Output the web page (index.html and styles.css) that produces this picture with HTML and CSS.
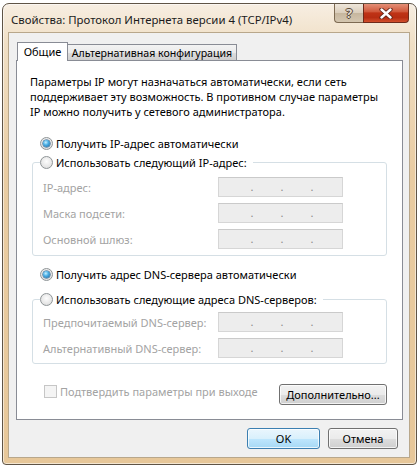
FILE: index.html
```html
<!DOCTYPE html>
<html lang="ru">
<head>
<meta charset="utf-8">
<title>Свойства: Протокол Интернета версии 4 (TCP/IPv4)</title>
<link rel="stylesheet" href="styles.css">
</head>
<body>
<div class="window">
  <div class="titlebar">
    <span class="title">Свойства: Протокол Интернета версии 4 (TCP/IPv4)</span>
    <div class="caption">
      <div class="cbtn help">?</div>
      <div class="cbtn close">
        <svg width="14" height="11" viewBox="0 0 14 11">
          <path d="M2.5 1.5 L11.5 9.5 M11.5 1.5 L2.5 9.5" stroke="#5e2215" stroke-width="4.2" stroke-linecap="round" fill="none"/>
          <path d="M2.5 1.5 L11.5 9.5 M11.5 1.5 L2.5 9.5" stroke="#ffffff" stroke-width="2.4" stroke-linecap="round" fill="none"/>
        </svg>
      </div>
    </div>
  </div>
  <div class="client">
    <div class="tabctl">
      <div class="tabs">
        <div class="tab active">Общие</div>
        <div class="tab">Альтернативная конфигурация</div>
      </div>
      <div class="panel">
        <p class="desc">Параметры IP могут назначаться автоматически, если сеть<br>поддерживает эту возможность. В противном случае параметры<br>IP можно получить у сетевого администратора.</p>

        <div class="radio-row first"><span class="radio checked"></span><span>Получить IP-адрес автоматически</span></div>

        <fieldset class="group g1">
          <legend><span class="radio"></span><span>Использовать следующий IP-адрес:</span></legend>
          <div class="field-row"><span class="lbl">IP-адрес:</span><span class="ipfield"><span>.</span><span>.</span><span>.</span></span></div>
          <div class="field-row"><span class="lbl">Маска подсети:</span><span class="ipfield"><span>.</span><span>.</span><span>.</span></span></div>
          <div class="field-row"><span class="lbl">Основной шлюз:</span><span class="ipfield"><span>.</span><span>.</span><span>.</span></span></div>
        </fieldset>

        <div class="radio-row dns"><span class="radio checked"></span><span>Получить адрес DNS-сервера автоматически</span></div>

        <fieldset class="group g2">
          <legend><span class="radio"></span><span>Использовать следующие адреса DNS-серверов:</span></legend>
          <div class="field-row"><span class="lbl">Предпочитаемый DNS-сервер:</span><span class="ipfield"><span>.</span><span>.</span><span>.</span></span></div>
          <div class="field-row"><span class="lbl">Альтернативный DNS-сервер:</span><span class="ipfield"><span>.</span><span>.</span><span>.</span></span></div>
        </fieldset>

        <div class="footer">
          <span class="check"></span><span class="check-lbl">Подтвердить параметры при выходе</span>
          <div class="btn adv">Дополнительно...</div>
        </div>
      </div>
    </div>
    <div class="dlgbtns">
      <div class="btn ok">OK</div>
      <div class="btn cancel">Отмена</div>
    </div>
  </div>
</div>
</body>
</html>
```

FILE: styles.css
```css
* { box-sizing: border-box; }
html, body { margin: 0; padding: 0; }
body {
  background: #ffffff;
  font-family: "Noto Sans", "Open Sans", "DejaVu Sans", sans-serif;
  font-size: 11px;
  color: #000;
}

.window {
  margin: 3px 0 0 2px;
  width: 415px;
  height: 462px;
  border: 1px solid #5f5446;
  border-radius: 7px 7px 4px 4px;
  background: linear-gradient(#f7eee2, #f0dfc5 40px, #e9cca2 170px, #e7c799);
  box-shadow: inset 0 0 0 1px rgba(255, 255, 255, 0.55);
  padding: 0 6px 6px 5px;
  display: flex;
  flex-direction: column;
}

.titlebar {
  height: 28px;
  display: flex;
  align-items: flex-start;
  flex: none;
}
.title {
  padding: 8px 0 0 3px;
  font-size: 11.4px;
  line-height: 15px;
  color: #1c1c1c;
  white-space: nowrap;
}
.caption {
  margin-left: auto;
  margin-right: 1px;
  display: flex;
}
.cbtn {
  height: 19px;
  display: flex;
  align-items: center;
  justify-content: center;
  border: 1px solid #7d6a52;
  border-top: none;
}
.help {
  width: 29px;
  border-right: none;
  border-radius: 0 0 0 4px;
  background: linear-gradient(#eee6da, #dacdbb 50%, #c6b69e 51%, #d4c6b0);
  color: #e4ddd2;
  font-weight: bold;
  font-size: 13px;
  line-height: 19px;
  text-shadow: 1px 0 0 #5a4a38, -1px 0 0 #5a4a38, 0 1px 0 #5a4a38, 0 -1px 0 #5a4a38;
}
.close {
  width: 46px;
  border-color: #6e2a1a;
  border-radius: 0 0 4px 0;
  background: linear-gradient(#e48f77, #d05a3d 42%, #bf3316 50%, #b72d12 75%, #d24f2c);
}

.client {
  flex: 1;
  background: #f0f0f0;
  border: 1px solid #b8a78b;
  display: flex;
  flex-direction: column;
}

.tabctl {
  margin: 9px 6px 0 7px;
}
.tabs {
  display: flex;
  align-items: flex-end;
  height: 19px;
  margin-bottom: -1px;
  position: relative;
  z-index: 1;
}
.tab {
  height: 16px;
  margin-bottom: 1px;
  margin-left: -1px;
  width: 170px;
  border: 1px solid #898c95;
  border-bottom: none;
  background: linear-gradient(#f3f3f3, #ebebeb 50%, #dddddd 51%, #cfcfcf);
  display: flex;
  align-items: center;
  justify-content: center;
  font-size: 10.6px;
  line-height: 14px;
  white-space: nowrap;
}
.tab.active {
  height: 19px;
  margin-bottom: 0;
  margin-left: 1px;
  width: 51px;
  font-size: 11px;
  background: #fff;
  position: relative;
  z-index: 2;
  padding-bottom: 1px;
}

.panel {
  height: 360px;
  background: #fff;
  border: 1px solid #898c95;
  padding: 13px 15px 14px 13px;
  display: flex;
  flex-direction: column;
}

.desc {
  margin: 0;
  line-height: 15px;
  white-space: nowrap;
}

.radio-row {
  display: flex;
  align-items: center;
  height: 17px;
  padding-left: 10px;
  gap: 3px;
  white-space: nowrap;
}
.radio-row.first { margin-top: 16px; }
.radio-row.dns { margin-top: 10px; }

.radio {
  width: 13px;
  height: 13px;
  flex: none;
  border-radius: 50%;
  border: 1px solid #8f9597;
  background: radial-gradient(circle at 50% 40%, #fdfdfd, #e3e3e3 70%, #d2d2d2);
  display: flex;
  align-items: center;
  justify-content: center;
}
.radio.checked::after {
  content: "";
  width: 7px;
  height: 7px;
  border-radius: 50%;
  background: radial-gradient(circle at 40% 35%, #c9f0ff, #4bb0e6 40%, #1d5f96 100%);
  box-shadow: 0 0 0 0.5px #1f4f79;
}

.group {
  margin: 0 0 0 2px;
  border: 1px solid #d5dfe5;
  border-radius: 3px;
  padding: 6px 43px 6px 10px;
  min-width: 0;
}
.g1 { margin-top: 2px; }
.g2 { margin-top: 8px; padding-top: 4px; padding-bottom: 5px; }
.group legend {
  display: flex;
  align-items: center;
  gap: 3px;
  height: 17px;
  padding: 0 6px 0 0;
  margin-left: -3px;
  white-space: nowrap;
}

.field-row {
  display: flex;
  align-items: center;
  height: 20px;
}
.field-row + .field-row { margin-top: 6px; }
.lbl {
  flex: 1;
  color: #a3a3a3;
  white-space: nowrap;
}
.ipfield {
  width: 125px;
  height: 20px;
  flex: none;
  border: 1px solid #d6d6d6;
  border-top-color: #cacaca;
  background: #ededed;
  display: flex;
  align-items: center;
  padding-left: 18px;
  color: #8a8a8a;
}
.ipfield span {
  width: 30px;
  text-align: center;
  line-height: 14px;
}

.footer {
  display: flex;
  align-items: flex-start;
  margin-top: 20px;
}
.check {
  width: 13px;
  height: 13px;
  margin: 1px 0 0 14px;
  border: 1px solid #c6c6c6;
  background: #f4f4f4;
  flex: none;
}
.check-lbl {
  margin-left: 3px;
  color: #a3a3a3;
  line-height: 15px;
  white-space: nowrap;
}

.btn {
  height: 21px;
  border: 1px solid #707070;
  border-radius: 3px;
  background: linear-gradient(#f2f2f2, #ebebeb 50%, #dddddd 51%, #cfcfcf);
  box-shadow: inset 0 0 0 1px rgba(255, 255, 255, 0.75);
  display: flex;
  align-items: center;
  justify-content: center;
  white-space: nowrap;
  color: #000;
}
.adv {
  margin-left: auto;
  width: 108px;
}

.dlgbtns {
  display: flex;
  justify-content: flex-end;
  gap: 8px;
  margin: 8px 11px 0 0;
}
.ok {
  width: 73px;
  border-color: #3c7fb1;
  background: linear-gradient(#eaf6fd, #d9f0fc 50%, #bee6fd 51%, #a7d9f5);
}
.cancel {
  width: 70px;
}
```
